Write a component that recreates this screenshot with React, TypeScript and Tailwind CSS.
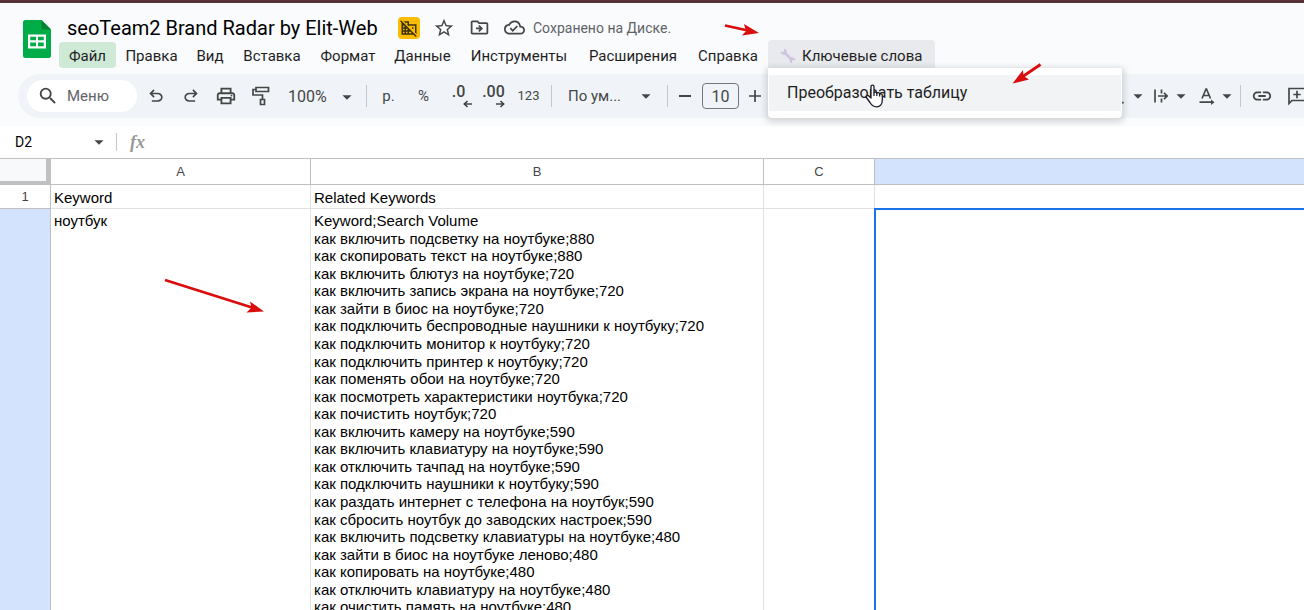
import React from 'react';
import {
  MdArrowDropDown,
  MdDomainDisabled,
  MdInsertLink,
  MdOutlineCloudDone,
  MdOutlineDriveFileMove,
  MdOutlinePrint,
  MdSearch,
  MdStarBorder,
  MdVerticalAlignBottom,
} from 'react-icons/md';

const MENUS = [
  { label: 'Файл', width: 'w-[57px]', active: true },
  { label: 'Правка', width: 'w-[71px]' },
  { label: 'Вид', width: 'w-[46px]' },
  { label: 'Вставка', width: 'w-[78px]' },
  { label: 'Формат', width: 'w-[74px]' },
  { label: 'Данные', width: 'w-[75px]' },
  { label: 'Инструменты', width: 'w-[118px]' },
  { label: 'Расширения', width: 'w-[110px]' },
  { label: 'Справка', width: 'w-[80px]' },
];

const KEYWORDS = [
  'Keyword;Search Volume',
  'как включить подсветку на ноутбуке;880',
  'как скопировать текст на ноутбуке;880',
  'как включить блютуз на ноутбуке;720',
  'как включить запись экрана на ноутбуке;720',
  'как зайти в биос на ноутбуке;720',
  'как подключить беспроводные наушники к ноутбуку;720',
  'как подключить монитор к ноутбуку;720',
  'как подключить принтер к ноутбуку;720',
  'как поменять обои на ноутбуке;720',
  'как посмотреть характеристики ноутбука;720',
  'как почистить ноутбук;720',
  'как включить камеру на ноутбуке;590',
  'как включить клавиатуру на ноутбуке;590',
  'как отключить тачпад на ноутбуке;590',
  'как подключить наушники к ноутбуку;590',
  'как раздать интернет с телефона на ноутбук;590',
  'как сбросить ноутбук до заводских настроек;590',
  'как включить подсветку клавиатуры на ноутбуке;480',
  'как зайти в биос на ноутбуке леново;480',
  'как копировать на ноутбуке;480',
  'как отключить клавиатуру на ноутбуке;480',
  'как очистить память на ноутбуке;480',
];

function SheetsLogo() {
  return (
    <svg viewBox="0 0 28 38" className="h-[38px] w-7" aria-hidden="true">
      <path d="M2.5 0H18.5L28 9.5V35.5A2.5 2.5 0 0 1 25.5 38H2.5A2.5 2.5 0 0 1 0 35.5V2.5A2.5 2.5 0 0 1 2.5 0Z" fill="#00ac47" />
      <path d="M18.5 0L28 9.5H18.5Z" fill="#00832d" />
      <path d="M5 14.5H23V28.5H5ZM7.2 16.7V20.2H13V16.7ZM15 16.7V20.2H20.8V16.7ZM7.2 22.6V26.3H13V22.6ZM15 22.6V26.3H20.8V22.6Z" fill="#fff" fillRule="evenodd" />
    </svg>
  );
}

function UndoIcon() {
  return (
    <svg viewBox="0 -960 960 960" className="size-5" fill="currentColor" aria-hidden="true">
      <path d="M280-200v-80h284q63 0 109.500-40T720-420q0-60-46.500-100T564-560H312l104 104-56 56-200-200 200-200 56 56-104 104h252q97 0 166.500 63T800-420q0 94-69.500 157T564-200H280Z" />
    </svg>
  );
}

function RedoIcon() {
  return (
    <svg viewBox="0 -960 960 960" className="size-5" fill="currentColor" aria-hidden="true">
      <path d="M396-200q-97 0-166.500-63T160-420q0-94 69.500-157T396-640h252L544-744l56-56 200 200-200 200-56-56 104-104H396q-63 0-109.500 40T240-420q0 60 46.500 100T396-280h284v80H396Z" />
    </svg>
  );
}

function RollerIcon() {
  return (
    <svg viewBox="0 0 20 20" className="size-5" fill="none" stroke="currentColor" strokeWidth="1.7" aria-hidden="true">
      <path d="M5 1.5H17.5V5.5H5ZM5 3.5H2V9H11.5V13.5M9.5 13.5H13.5V18.5H9.5Z" />
    </svg>
  );
}

function OverflowIcon() {
  return (
    <svg viewBox="0 0 16 16" className="size-4" fill="none" stroke="currentColor" strokeWidth="1.7" aria-hidden="true">
      <path d="M2 1.5V14.5M8.5 1.5V5.5M8.5 10.5V14.5M5 8H14M11 4.8L14.2 8L11 11.2" />
    </svg>
  );
}

function RotationIcon() {
  return (
    <svg viewBox="0 0 18 18" className="size-[18px]" fill="none" stroke="currentColor" strokeWidth="1.7" aria-hidden="true">
      <path d="M4 11.5L8 2H8.5L12.5 11.5M5.3 8.5H11.2M1.5 15.2H15" />
      <path d="M13 12.5L16.5 15.2L13 18Z" fill="currentColor" stroke="none" />
    </svg>
  );
}

function CommentIcon() {
  return (
    <svg viewBox="0 0 20 20" className="size-5 shrink-0" fill="none" stroke="currentColor" strokeWidth="1.7" aria-hidden="true">
      <path d="M2 17.5V2.5H18V14.5H5ZM10 4.8V12.2M6.3 8.5H13.7" />
    </svg>
  );
}

function DecimalIcon({ digits, right }: { digits: string; right?: boolean }) {
  return (
    <span className="relative pb-2 text-base leading-4 font-medium">
      {digits}
      <svg viewBox="0 0 10 8" className={`absolute bottom-0 h-2 w-2.5 ${right ? 'right-0' : '-right-2'}`} fill="none" stroke="currentColor" strokeWidth="1.6" aria-hidden="true">
        {right ? <path d="M1 4H8.5M5.5 1L8.7 4L5.500 7" /> : <path d="M9 4H1.5M4.500 1L1.300 4L4.500 7" />}
      </svg>
    </span>
  );
}

function Wrench() {
  return (
    <svg viewBox="0 0 16 16" className="size-4" aria-hidden="true">
      <path d="M4.5 4.5L11.5 11.5" stroke="#cfc3e0" strokeWidth="2.6" />
      <path d="M4 .8L4.200 3.400L2.800 4.300L.7 3.100C.3 5.700 2.500 7.300 4.800 6.500L6.500 4.800C7 2.500 6 1 4 .8Z" fill="#cfc3e0" />
      <path d="M12.200 15.200L12 12.700L13.300 11.800L15.400 12.900C15.800 10.300 13.500 8.900 11.300 9.600L9.700 11.300C9.200 13.600 10.300 15 12.200 15.200Z" fill="#cfc3e0" />
    </svg>
  );
}

function HandCursor() {
  return (
    <svg viewBox="0 0 19 24" className="absolute top-4 left-[97px] h-6 w-[19px]" aria-hidden="true">
      <path
        d="M6 14V2.8C6 .6 9 .6 9 2.8V9C9.2 7.6 11.8 7.8 11.8 9.5C12.2 8.2 14.6 8.5 14.6 10.3C15.2 9.3 17.3 9.7 17.3 11.5V16C17.3 20.5 15 22.8 11.5 22.8C8 22.8 6.5 21 5 18.5L1.4 13.5C.6 12 2.5 10.8 3.8 12ZM9 9V12M11.8 9.5V12M14.6 10.3V12.5"
        fill="#fff"
        stroke="#1b1b2b"
        strokeWidth="1.3"
        strokeLinejoin="round"
      />
    </svg>
  );
}

function Divider() {
  return <span className="h-[22px] w-px shrink-0 bg-[#c7c7c7]" />;
}

function ToolButton({ label, children }: { label: string; children: React.ReactNode }) {
  return (
    <button aria-label={label} className="flex h-8 w-[35px] shrink-0 items-center justify-center">
      {children}
    </button>
  );
}

function Header() {
  return (
    <header className="flex h-[71px] shrink-0 border-t-[3px] border-[#553237] pl-[23px] whitespace-nowrap">
      <div className="w-9 shrink-0 pt-[17px]">
        <SheetsLogo />
      </div>
      <div>
        <div className="flex h-[37px] items-center pt-3 pl-2 text-[#444746]">
          <h1 className="w-[331px] text-xl text-black">seoTeam2 Brand Radar by Elit-Web</h1>
          <span className="flex size-[22px] items-center justify-center rounded bg-[#fbbc04] text-[#3c3206]">
            <MdDomainDisabled className="size-[18px]" />
          </span>
          <button aria-label="Пометить" className="ml-[13px]"><MdStarBorder className="size-[22px]" /></button>
          <button aria-label="Переместить" className="ml-[14px]"><MdOutlineDriveFileMove className="size-[21px]" /></button>
          <button aria-label="Статус документа" className="ml-[14px]"><MdOutlineCloudDone className="size-[21px]" /></button>
          <span className="ml-2 text-sm text-[#5f6368]">Сохранено на Диске.</span>
        </div>
        <nav className="flex h-7 items-end text-[15px] text-[#1f1f1f]">
          {MENUS.map((menu) => (
            <button
              key={menu.label}
              className={`h-[26px] shrink-0 rounded pt-[2px] text-center ${menu.width} ${menu.active ? 'bg-[#ceead6]' : ''}`}
            >
              {menu.label}
            </button>
          ))}
          <div className="relative">
            <button className="flex h-7 w-[167px] items-center gap-[6px] rounded-t bg-[#e8eaed] pt-1 pl-3">
              <Wrench />
              Ключевые слова
            </button>
            <div className="absolute top-7 left-0 z-10 w-[354px] rounded-b bg-white px-px py-[7px] shadow-[0_2px_6px_2px_rgba(60,64,67,0.2)]">
              <button className="block h-9 w-full bg-[#f1f3f4] pl-[18px] text-left text-base">Преобразовать таблицу</button>
              <HandCursor />
            </div>
          </div>
        </nav>
      </div>
    </header>
  );
}

function Toolbar() {
  return (
    <div className="mt-[3px] ml-[18px] flex h-11 shrink-0 items-center overflow-hidden rounded-l-full bg-[#f0f4f9] pl-[9px] text-[#444746]">
      <label className="flex h-8 w-[110px] shrink-0 items-center rounded-full bg-white pl-[10px]">
        <MdSearch className="size-[22px] shrink-0" />
        <input placeholder="Меню" aria-label="Меню" className="ml-2 w-16 pt-px text-[15px] outline-none placeholder:text-[#5f6368]" />
      </label>
      <span className="w-px shrink-0" />
      <ToolButton label="Отменить"><UndoIcon /></ToolButton>
      <ToolButton label="Повторить"><RedoIcon /></ToolButton>
      <ToolButton label="Печать"><MdOutlinePrint className="size-[22px]" /></ToolButton>
      <ToolButton label="Копировать форматирование"><RollerIcon /></ToolButton>
      <button className="flex w-[88px] shrink-0 items-center justify-between pt-px pr-2 pl-[10px] text-base">
        100%
        <MdArrowDropDown className="size-[22px]" />
      </button>
      <Divider />
      <div className="flex pl-1 text-[15px]">
        <ToolButton label="Денежный формат">р.</ToolButton>
        <ToolButton label="Процентный формат">%</ToolButton>
        <ToolButton label="Уменьшить число знаков"><DecimalIcon digits=".0" /></ToolButton>
        <ToolButton label="Увеличить число знаков"><DecimalIcon digits=".00" right /></ToolButton>
        <ToolButton label="Другие форматы"><span className="text-[13px]">123</span></ToolButton>
      </div>
      <span className="w-[5px] shrink-0" />
      <Divider />
      <button className="flex w-[115px] shrink-0 items-center justify-between pr-[10px] pl-4 text-[15px]">
        По ум...
        <MdArrowDropDown className="size-[22px]" />
      </button>
      <Divider />
      <button aria-label="Уменьшить размер шрифта" className="flex w-[34px] shrink-0 justify-center">
        <span className="h-[2px] w-3 bg-[#444746]" />
      </button>
      <input aria-label="Размер шрифта" defaultValue="10" className="h-[26px] w-[37px] shrink-0 rounded border border-[#747775] pt-px text-center text-base" />
      <button aria-label="Увеличить размер шрифта" className="flex h-8 w-8 shrink-0 items-center justify-center">
        <svg viewBox="0 0 12 12" className="size-3" stroke="currentColor" strokeWidth="1.7" aria-hidden="true"><path d="M6 0V12M0 6H12" /></svg>
      </button>
      <div className="flex shrink-0 items-center pl-[336px]">
        <button aria-label="Вертикальное выравнивание" className="flex w-[46px] items-center"><MdVerticalAlignBottom className="size-5 shrink-0" /><MdArrowDropDown className="size-[22px]" /></button>
        <button aria-label="Перенос текста" className="flex w-[45px] items-center gap-px"><OverflowIcon /><MdArrowDropDown className="size-[22px]" /></button>
        <button aria-label="Поворот текста" className="flex w-[42px] items-center"><RotationIcon /><MdArrowDropDown className="size-[22px]" /></button>
      </div>
      <Divider />
      <div className="flex shrink-0 pl-[3px]">
        <ToolButton label="Вставить ссылку"><MdInsertLink className="size-[22px]" /></ToolButton>
        <ToolButton label="Добавить комментарий"><CommentIcon /></ToolButton>
      </div>
    </div>
  );
}

function FormulaBar() {
  return (
    <div className="mt-2 flex h-[33px] shrink-0 items-center border-b border-[#c0c0c0] bg-white">
      <input aria-label="Поле имени" defaultValue="D2" className="w-[88px] pl-[15px] text-sm text-black" />
      <MdArrowDropDown className="size-[22px] text-[#444746]" />
      <span className="ml-[6px] h-[18px] w-px bg-[#c7c7c7]" />
      <span className="ml-[13px] font-['Liberation_Serif',serif] text-lg font-bold text-[#999] italic">fx</span>
    </div>
  );
}

function Sheet() {
  const head = 'border-r border-b border-[#c0c0c0] text-[13px] font-normal text-[#444746]';
  const cell = 'border-r border-b border-[#e1e1e1] px-[3px] text-left align-top';
  return (
    <table className="w-full table-fixed border-separate border-spacing-0 bg-white font-['Liberation_Sans',Arial,sans-serif] text-[15px] text-black">
      <colgroup>
        <col className="w-[51px]" />
        <col className="w-[260px]" />
        <col className="w-[453px]" />
        <col className="w-[111px]" />
        <col />
      </colgroup>
      <thead>
        <tr className="h-[26px]">
          <th aria-label="Выделить всё" className="border-r-[5px] border-b-4 border-[#c0c0c0] bg-[#f8f9fa]" />
          <th className={head}>A</th>
          <th className={head}>B</th>
          <th className={head}>C</th>
          <th aria-label="D" className="border-b border-[#c0c0c0] bg-[#d3e3fd]" />
        </tr>
      </thead>
      <tbody>
        <tr className="h-6">
          <th className={head}>1</th>
          <td className={`${cell} pt-[3px] leading-5`}>Keyword</td>
          <td className={`${cell} pt-[3px] leading-5`}>Related Keywords</td>
          <td className={cell} />
          <td className="border-b border-[#e1e1e1]" />
        </tr>
        <tr>
          <th aria-label="2" className="border-r border-[#c0c0c0] bg-[#d3e3fd]" />
          <td className={`${cell} pt-[3px] leading-[18px]`}>ноутбук</td>
          <td className={`${cell} pt-[3px]`}>
            <ul className="grid h-[404px] auto-rows-fr leading-[18px]">
              {KEYWORDS.map((line) => (
                <li key={line} className="h-0 whitespace-nowrap">{line}</li>
              ))}
            </ul>
          </td>
          <td className={cell} />
          <td className="relative">
            <div className="absolute -top-px right-0 bottom-0 -left-px border-t-2 border-l-2 border-[#1a73e8]" />
          </td>
        </tr>
      </tbody>
    </table>
  );
}

// Red pointers drawn over the page
function Arrows() {
  return (
    <svg viewBox="0 0 1304 610" width="1304" height="610" className="pointer-events-none absolute top-0 left-0 z-20" aria-hidden="true">
      <g stroke="#d90d0d" strokeWidth="2.8">
        <path d="M725 25.5L748 30.5M1040.500 64.500L1022 77M165 280L252 307.500" />
      </g>
      <g fill="#d90d0d">
        <path d="M759 33L742 35.5L746 31L744 24Z" />
        <path d="M1012.500 83.500L1023 70L1023.500 76L1029 79.500Z" />
        <path d="M264 311.500L246.500 312.500L251.500 307.500L250 301.500Z" />
      </g>
    </svg>
  );
}

export default function App() {
  return (
    <div className="relative flex h-screen flex-col overflow-hidden bg-[#f9fbfd] font-[Roboto,sans-serif]">
      <Header />
      <Toolbar />
      <FormulaBar />
      <Sheet />
      <Arrows />
    </div>
  );
}
